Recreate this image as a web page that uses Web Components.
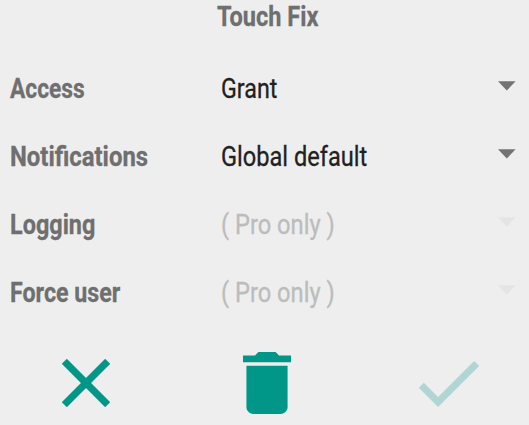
<!DOCTYPE html>
<html lang="en"><head><meta charset="utf-8"><title>Touch Fix</title>
<style>body{margin:0;background:#eee;font-family:Roboto,"Liberation Sans",sans-serif}</style></head><body>
<touch-dialog></touch-dialog>
<script>
class FitText extends HTMLElement{
 connectedCallback(){
  const w=+this.getAttribute('width');
  this.attachShadow({mode:'open'}).innerHTML='<style>:host{display:block;white-space:nowrap;width:'+w+'px}span{display:inline-block;transform-origin:0 50%;-webkit-text-stroke:.3px currentColor}</style><span><slot></slot></span>';
  const s=this.shadowRoot.querySelector('span');
  s.style.transform='scaleX('+w/s.offsetWidth+')';
 }
}
class SettingRow extends HTMLElement{
 connectedCallback(){
  const a=n=>this.getAttribute(n);
  this.attachShadow({mode:'open'}).innerHTML=`<style>
  :host{display:grid;grid-template-columns:211px 1fr 18px;align-items:center;height:68px;padding:2px 13px 0 10px;box-sizing:border-box;font-size:27px;line-height:32px;color:#212121}
  :host([disabled]){color:#bcbcbc}
  .l{font-weight:700;color:#6f6f6f}
  svg{display:block;margin-top:-7px;fill:#737373}
  :host([disabled]) svg{fill:#e4e4e4}
  </style><fit-text class="l" width="${a('lw')}">${a('label')}</fit-text><fit-text width="${a('vw')}">${a('value')}</fit-text><svg width="18" height="10"><path d="M0 .3H17.600L8.800 9.600Z"/></svg>`;
 }
}
class TouchDialog extends HTMLElement{
 connectedCallback(){
  this.attachShadow({mode:'open'}).innerHTML=`<style>
  :host{display:flex;flex-direction:column;height:425px;overflow:hidden}
  header{height:54px;box-sizing:border-box;padding-left:217px;font-size:27px;line-height:34px;font-weight:700;color:#6f6f6f}
  footer{display:grid;grid-template-columns:62px 48px 133px 48px 128px 60px;height:99px;align-items:start;padding-top:26px;box-sizing:border-box;fill:#009688}
  svg{display:block}
  </style><header><fit-text width="101">Touch Fix</fit-text></header>
  <setting-row label="Access" lw="75" value="Grant" vw="56"></setting-row>
  <setting-row label="Notifications" lw="138" value="Global default" vw="146"></setting-row>
  <setting-row disabled label="Logging" lw="85" value="( Pro only )" vw="114"></setting-row>
  <setting-row disabled label="Force user" lw="110" value="( Pro only )" vw="114"></setting-row>
  <footer><i></i><svg style="margin-top:7px" width="48" height="48" viewBox="5 5 14 14"><path stroke="#009688" stroke-width=".12" d="M19 6.41 17.59 5 12 10.59 6.41 5 5 6.41 10.59 12 5 17.59 6.41 19 12 13.41 17.59 19 19 17.59 13.41 12z"/></svg>
  <i></i><svg width="48" height="62" viewBox="5 3 14 18" preserveAspectRatio="none"><path d="M6 19c0 1.100.9 2 2 2h8c1.100 0 2-.9 2-2V7H6v12zM19 4h-3.500l-1-1h-5l-1 1H5v2h14V4z"/></svg>
  <i></i><svg style="margin-top:9px;opacity:.26" width="60" height="46" viewBox="3.410 5.590 17.590 13.410"><path stroke="#009688" stroke-width=".12" d="M9 16.170 4.830 12l-1.420 1.410L9 19 21 7l-1.410-1.410z"/></svg></footer>`;
 }
}
customElements.define('fit-text',FitText);
customElements.define('setting-row',SettingRow);
customElements.define('touch-dialog',TouchDialog);
</script></body></html>
